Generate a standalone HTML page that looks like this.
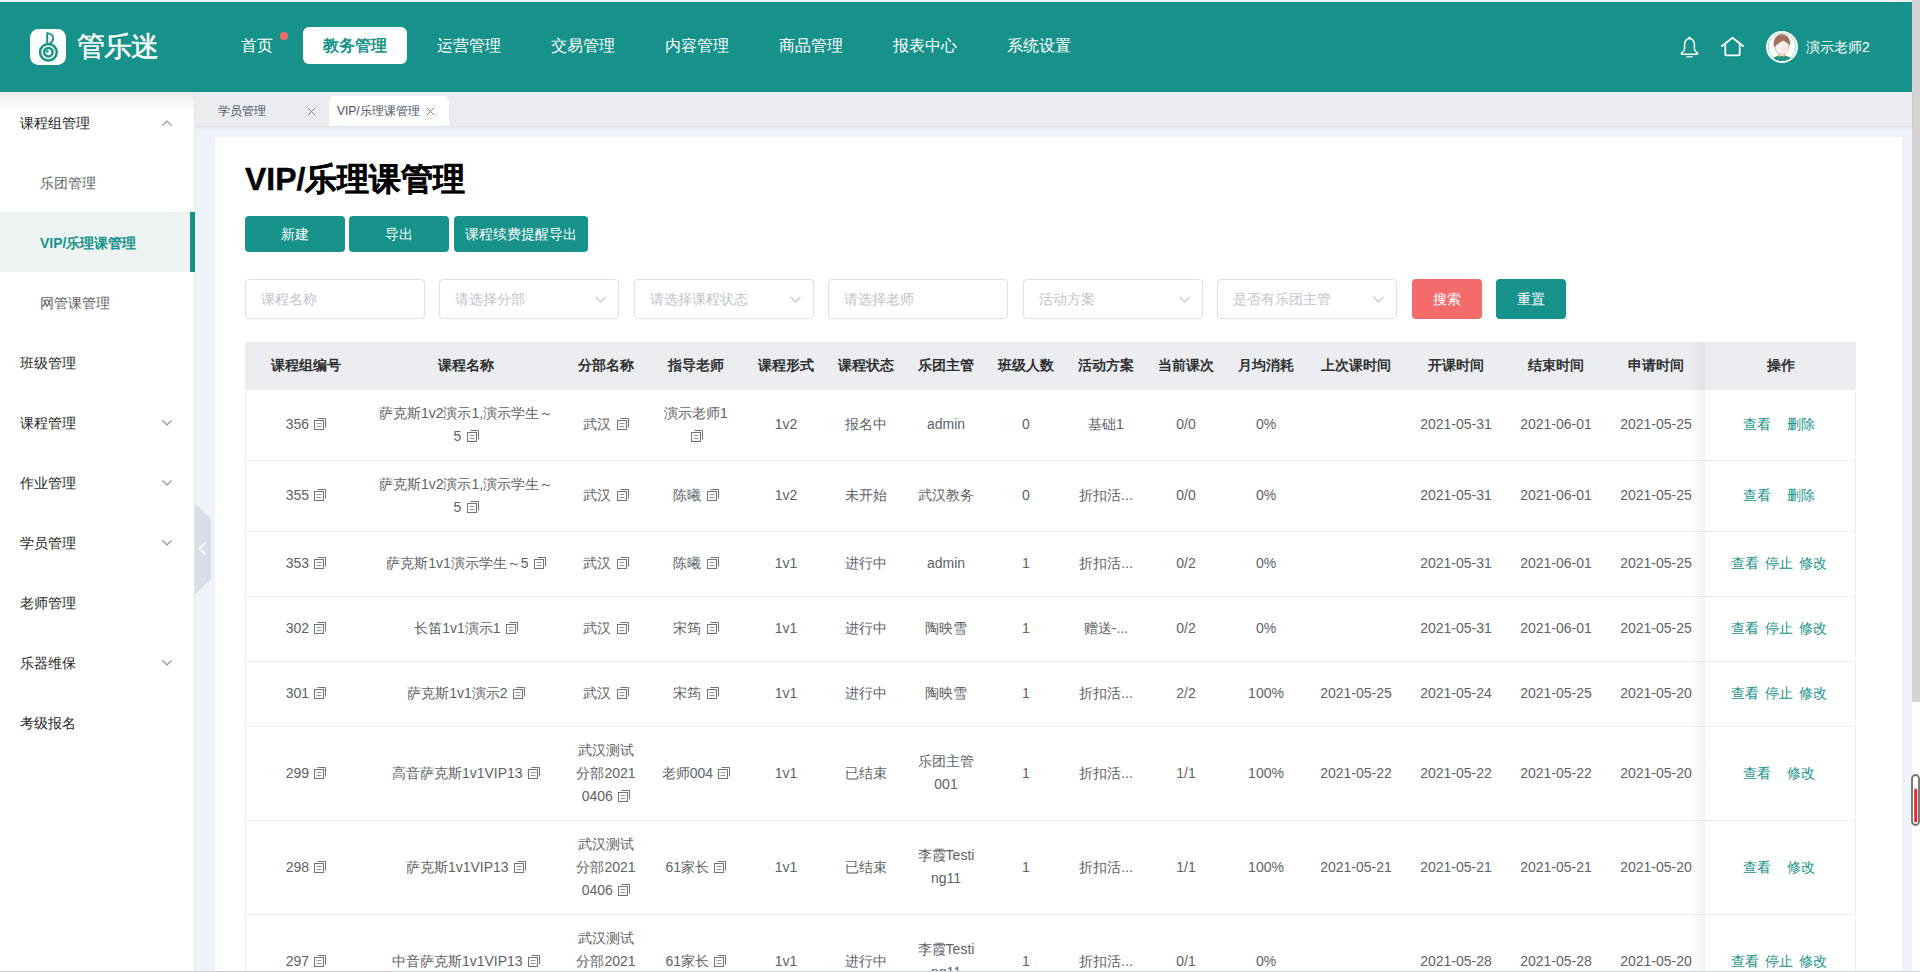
<!DOCTYPE html>
<html><head><meta charset="utf-8">
<style>
*{box-sizing:border-box;margin:0;padding:0}
html,body{width:1920px;height:972px;overflow:hidden;background:#fff;font-family:"Liberation Sans",sans-serif;font-size:14px;color:#606266}
.abs{position:absolute}
#topline{left:0;top:0;width:1920px;height:2px;background:#f4f0f1}
#header{left:0;top:2px;width:1912px;height:90px;background:#16928a}
#logo{left:30px;top:27px;width:36px;height:36px;background:#fff;border-radius:8px}
#logotext{left:77px;top:29px;font-size:28px;color:#fff;line-height:36px;letter-spacing:-1px;-webkit-text-stroke:0.5px #fff}
.nav{position:absolute;top:27px;height:37px;line-height:37px;font-size:16px;color:#fff;padding:0 20px;border-radius:6px;white-space:nowrap}
.nav.act{background:#fff;color:#16928a;font-weight:bold}
#dot{left:280px;top:32px;width:8px;height:8px;border-radius:50%;background:#f26a6a}
#uname{left:1806px;top:37px;font-size:14px;color:#fff;line-height:20px}
#scroll{left:1912px;top:0;width:8px;height:702px;background:#d4d4d4}
#sidebar{left:0;top:92px;width:195px;height:880px;background:#fff;border-right:1px solid #e4e6ea}
#sideshadow{left:0;top:92px;width:194px;height:22px;background:linear-gradient(#ececec,rgba(255,255,255,0))}
.si{position:absolute;left:0;width:194px;height:60px;line-height:60px;font-size:14px;color:#262626;padding-left:20px;padding-top:1px}
.si.sub{padding-left:40px;color:#606266}
.si.act{background:#edf2f2;color:#16928a;font-weight:bold}
.si.act:after{content:"";position:absolute;right:-1px;top:0;width:5px;height:60px;background:#16928a}
.chev{position:absolute;left:162px;top:27px;width:10px;height:8px}
.ops2,.ops3{padding:0 6px 0 2px}
#gutter{left:195px;top:126px;width:1717px;height:846px;background:#eef2f9}
#tabbar{left:195px;top:92px;width:1717px;height:34px;background:#ebecef;box-shadow:0 1px 3px rgba(0,0,0,.1)}
.tab{position:absolute;top:4px;height:30px;line-height:30px;font-size:12px;color:#4a5063}
.tab.act{background:#fff;border-radius:5px 5px 0 0}
#card{left:215px;top:137px;width:1687px;height:835px;background:#fff}
#title{left:245px;top:159px;font-size:32px;font-weight:bold;color:#000;line-height:40px;-webkit-text-stroke:0.4px #000}
.btn{position:absolute;top:216px;height:36px;line-height:36px;font-size:14px;color:#fff;background:#16928a;border-radius:4px;text-align:center}
.inp{position:absolute;top:279px;width:180px;height:40px;border:1px solid #dcdfe6;border-radius:4px;line-height:38px;padding-left:15px;color:#c0c4cc;font-size:14px}
.inp svg{position:absolute;right:12px;top:16px}
.sbtn{position:absolute;top:279px;width:70px;height:40px;line-height:40px;text-align:center;color:#fff;font-size:14px;border-radius:4px}
#tbl{left:245px;top:342px;width:1611px;height:630px;overflow:hidden;border-left:1px solid #ebeef5;border-right:1px solid #ebeef5}
table{border-collapse:collapse;table-layout:fixed;width:1610px}
th{background:#ebedf0;height:48px;font-size:14px;color:#303133;font-weight:bold;text-align:center;padding:0}
td{border-bottom:1px solid #ebeef5;text-align:center;font-size:14px;color:#606266;line-height:23px;padding:0 4px;vertical-align:middle}
.cp{display:inline-block;width:12px;height:12px;vertical-align:-1px;margin-left:1.5px;color:#6a6d73}
.op{color:#16928a}
#fixshadow{left:1690px;top:342px;width:15px;height:630px;background:linear-gradient(90deg,rgba(0,0,0,0),rgba(0,0,0,.05))}
#handle{left:195px;top:504px;width:16px;height:90px}
#bottomline{left:0;top:971px;width:1920px;height:1px;background:linear-gradient(90deg,#c8c8c8 0,#c8c8c8 392px,#c4dede 392px,#c4dede 100%)}
</style></head><body>
<svg width="0" height="0" style="position:absolute"><defs><symbol id="cpi" viewBox="0 0 12 12"><rect x="0.5" y="2.5" width="9" height="9" fill="none" stroke="currentColor" stroke-width="0.95"/><path d="M3.5 0.5H11.5V9.5" fill="none" stroke="currentColor" stroke-width="0.95"/><path d="M2.6 5.6H7.4M2.6 8.6H7.4" stroke="currentColor" stroke-width="0.8"/></symbol></defs></svg>
<div id="topline" class="abs"></div>
<div id="header" class="abs"></div>
<svg class="abs" style="left:30px;top:29px" width="36" height="36" viewBox="0 0 36 36">
<rect x="0" y="0" width="36" height="36" rx="8.5" fill="#fff"/>
<circle cx="18.4" cy="23.2" r="8.3" fill="none" stroke="#16928a" stroke-width="2.5"/>
<circle cx="18.4" cy="23.2" r="4.2" fill="none" stroke="#16928a" stroke-width="2.5"/>
<circle cx="17.4" cy="22.3" r="1.3" fill="#16928a"/>
<path d="M17.2 14.2V3.4" stroke="#16928a" stroke-width="1.9" fill="none"/>
<path d="M17.2 4.1C21.5 4.6 23.3 7.4 23.2 9.6C23.1 11.6 21.9 13.2 20 14.2" stroke="#16928a" stroke-width="1.9" fill="none"/>
</svg>
<div id="logotext" class="abs">管乐迷</div>
<div class="nav" style="left:221px">首页</div>
<div id="dot" class="abs"></div>
<div class="nav act" style="left:303px">教务管理</div>
<div class="nav" style="left:417px">运营管理</div>
<div class="nav" style="left:531px">交易管理</div>
<div class="nav" style="left:645px">内容管理</div>
<div class="nav" style="left:759px">商品管理</div>
<div class="nav" style="left:873px">报表中心</div>
<div class="nav" style="left:987px">系统设置</div>
<svg class="abs" style="left:1679px;top:36px" width="21" height="22" viewBox="0 0 21 22">
<path d="M10.5 2.8C7.2 2.8 5.6 5.5 5.6 8.6V12.8C5.6 14.6 4.3 16 2.5 17.2C2 17.6 2.2 18.2 2.8 18.2H18.2C18.8 18.2 19 17.6 18.5 17.2C16.7 16 15.4 14.6 15.4 12.8V8.6C15.4 5.5 13.8 2.8 10.5 2.8Z" fill="none" stroke="#fff" stroke-width="1.5"/>
<path d="M9.3 2.9C9.3 1.8 9.8 1.3 10.5 1.3C11.2 1.3 11.7 1.8 11.7 2.9" fill="none" stroke="#fff" stroke-width="1.3"/>
<path d="M7.2 20.8H13.8" stroke="#fff" stroke-width="1.1"/>
</svg>
<svg class="abs" style="left:1721px;top:36px" width="23" height="21" viewBox="0 0 23 21">
<path d="M1 10L11.5 1.8L22 10" fill="none" stroke="#fff" stroke-width="1.8" stroke-linejoin="round" stroke-linecap="round"/>
<path d="M4.3 7.6V18.3C4.3 19 4.7 19.3 5.3 19.3H17.7C18.3 19.3 18.7 19 18.7 18.3V7.6" fill="none" stroke="#fff" stroke-width="1.8"/>
</svg>
<svg class="abs" style="left:1766px;top:31px" width="32" height="32" viewBox="0 0 32 32">
<defs><clipPath id="avc"><circle cx="16" cy="16" r="14"/></clipPath></defs>
<circle cx="16" cy="16" r="16" fill="#fff"/>
<circle cx="16" cy="16" r="13.8" fill="none" stroke="#8fcdc8" stroke-width="0.8"/>
<g clip-path="url(#avc)">
<path d="M6 30Q7 25.8 12.5 24.8H19.5Q25 25.8 26 30V34H6Z" fill="#16928a"/>
</g>
<rect x="13.3" y="20" width="5.2" height="5" fill="#fdf1ef"/>
<path d="M13.3 22.5V24.8M18.5 22.5V24.8" stroke="#8d7b78" stroke-width="0.5"/>
<ellipse cx="15.8" cy="16.3" rx="6.6" ry="7" fill="#fdf1ef" stroke="#8d7b78" stroke-width="0.5"/>
<path d="M15.8 16.3H22.4C22.2 20.3 19.5 23.3 15.8 23.3Z" fill="#fbe4e0"/>
<path d="M11.8 23.6L13.2 27L14.6 25ZM19.2 23.6L17.8 27L16.6 25Z" fill="#d9a514"/>
<path d="M7.9 16.2C6.4 9.2 10 3.2 15.8 3.2C21.6 3.2 25.2 8.2 24 15.6C23.6 14 23 13 22.3 12.5C20.6 11.6 19 10.6 17.4 9.6C14.2 11.4 11 13.4 7.9 16.2Z" fill="#a2705c"/>
</svg>
<div id="uname" class="abs">演示老师2</div>
<div id="scroll" class="abs"></div>

<div id="gutter" class="abs"></div>
<div id="tabbar" class="abs">
  <div class="tab" style="left:23px;width:110px">学员管理</div>
  <svg class="abs" style="left:111.5px;top:15px" width="9" height="9" viewBox="0 0 9 9"><path d="M0.8 0.8L8.2 8.2M8.2 0.8L0.8 8.2" stroke="#7d8290" stroke-width="1"/></svg>
  <div class="tab act" style="left:134px;width:120px;padding-left:8px">VIP/乐理课管理</div>
  <svg class="abs" style="left:230.5px;top:15px" width="9" height="9" viewBox="0 0 9 9"><path d="M0.8 0.8L8.2 8.2M8.2 0.8L0.8 8.2" stroke="#7d8290" stroke-width="1"/></svg>
</div>
<div id="card" class="abs"></div>
<div id="title" class="abs">VIP/乐理课管理</div>
<div class="btn" style="left:245px;width:100px">新建</div>
<div class="btn" style="left:349px;width:100px">导出</div>
<div class="btn" style="left:454px;width:134px">课程续费提醒导出</div>


<div class="inp" style="left:245px">课程名称</div>
<div class="inp" style="left:439px">请选择分部<svg width="11" height="7" viewBox="0 0 11 7"><path d="M0.5 0.8 L5.5 5.8 L10.5 0.8" fill="none" stroke="#c0c4cc" stroke-width="1.2"/></svg></div>
<div class="inp" style="left:634px">请选择课程状态<svg width="11" height="7" viewBox="0 0 11 7"><path d="M0.5 0.8 L5.5 5.8 L10.5 0.8" fill="none" stroke="#c0c4cc" stroke-width="1.2"/></svg></div>
<div class="inp" style="left:828px">请选择老师</div>
<div class="inp" style="left:1023px">活动方案<svg width="11" height="7" viewBox="0 0 11 7"><path d="M0.5 0.8 L5.5 5.8 L10.5 0.8" fill="none" stroke="#c0c4cc" stroke-width="1.2"/></svg></div>
<div class="inp" style="left:1217px">是否有乐团主管<svg width="11" height="7" viewBox="0 0 11 7"><path d="M0.5 0.8 L5.5 5.8 L10.5 0.8" fill="none" stroke="#c0c4cc" stroke-width="1.2"/></svg></div>
<div class="sbtn" style="left:1412px;background:#f36b6b">搜索</div>
<div class="sbtn" style="left:1496px;background:#16928a">重置</div>
<div id="tbl" class="abs"><table><colgroup><col style="width:120px"><col style="width:200px"><col style="width:80px"><col style="width:100px"><col style="width:80px"><col style="width:80px"><col style="width:80px"><col style="width:80px"><col style="width:80px"><col style="width:80px"><col style="width:80px"><col style="width:100px"><col style="width:100px"><col style="width:100px"><col style="width:100px"><col style="width:150px"></colgroup>
<tr><th>课程组编号</th><th>课程名称</th><th>分部名称</th><th>指导老师</th><th>课程形式</th><th>课程状态</th><th>乐团主管</th><th>班级人数</th><th>活动方案</th><th>当前课次</th><th>月均消耗</th><th>上次课时间</th><th>开课时间</th><th>结束时间</th><th>申请时间</th><th>操作</th></tr>
<tr style="height:70px"><td>356 <svg class="cp" viewBox="0 0 12 12"><use href="#cpi"/></svg></td><td>萨克斯1v2演示1,演示学生～<br>5 <svg class="cp" viewBox="0 0 12 12"><use href="#cpi"/></svg></td><td>武汉 <svg class="cp" viewBox="0 0 12 12"><use href="#cpi"/></svg></td><td>演示老师1<br><svg class="cp" viewBox="0 0 12 12"><use href="#cpi"/></svg></td><td>1v2</td><td>报名中</td><td>admin</td><td>0</td><td>基础1</td><td>0/0</td><td>0%</td><td></td><td>2021-05-31</td><td>2021-06-01</td><td>2021-05-25</td><td class="ops2"><span class="op">查看</span><span class="op" style="margin-left:16px">删除</span></td></tr>
<tr style="height:71px"><td>355 <svg class="cp" viewBox="0 0 12 12"><use href="#cpi"/></svg></td><td>萨克斯1v2演示1,演示学生～<br>5 <svg class="cp" viewBox="0 0 12 12"><use href="#cpi"/></svg></td><td>武汉 <svg class="cp" viewBox="0 0 12 12"><use href="#cpi"/></svg></td><td>陈曦 <svg class="cp" viewBox="0 0 12 12"><use href="#cpi"/></svg></td><td>1v2</td><td>未开始</td><td>武汉教务</td><td>0</td><td>折扣活...</td><td>0/0</td><td>0%</td><td></td><td>2021-05-31</td><td>2021-06-01</td><td>2021-05-25</td><td class="ops2"><span class="op">查看</span><span class="op" style="margin-left:16px">删除</span></td></tr>
<tr style="height:65px"><td>353 <svg class="cp" viewBox="0 0 12 12"><use href="#cpi"/></svg></td><td>萨克斯1v1演示学生～5 <svg class="cp" viewBox="0 0 12 12"><use href="#cpi"/></svg></td><td>武汉 <svg class="cp" viewBox="0 0 12 12"><use href="#cpi"/></svg></td><td>陈曦 <svg class="cp" viewBox="0 0 12 12"><use href="#cpi"/></svg></td><td>1v1</td><td>进行中</td><td>admin</td><td>1</td><td>折扣活...</td><td>0/2</td><td>0%</td><td></td><td>2021-05-31</td><td>2021-06-01</td><td>2021-05-25</td><td class="ops3"><span class="op">查看</span><span class="op" style="margin-left:6px">停止</span><span class="op" style="margin-left:6px">修改</span></td></tr>
<tr style="height:65px"><td>302 <svg class="cp" viewBox="0 0 12 12"><use href="#cpi"/></svg></td><td>长笛1v1演示1 <svg class="cp" viewBox="0 0 12 12"><use href="#cpi"/></svg></td><td>武汉 <svg class="cp" viewBox="0 0 12 12"><use href="#cpi"/></svg></td><td>宋筠 <svg class="cp" viewBox="0 0 12 12"><use href="#cpi"/></svg></td><td>1v1</td><td>进行中</td><td>陶映雪</td><td>1</td><td>赠送-...</td><td>0/2</td><td>0%</td><td></td><td>2021-05-31</td><td>2021-06-01</td><td>2021-05-25</td><td class="ops3"><span class="op">查看</span><span class="op" style="margin-left:6px">停止</span><span class="op" style="margin-left:6px">修改</span></td></tr>
<tr style="height:65px"><td>301 <svg class="cp" viewBox="0 0 12 12"><use href="#cpi"/></svg></td><td>萨克斯1v1演示2 <svg class="cp" viewBox="0 0 12 12"><use href="#cpi"/></svg></td><td>武汉 <svg class="cp" viewBox="0 0 12 12"><use href="#cpi"/></svg></td><td>宋筠 <svg class="cp" viewBox="0 0 12 12"><use href="#cpi"/></svg></td><td>1v1</td><td>进行中</td><td>陶映雪</td><td>1</td><td>折扣活...</td><td>2/2</td><td>100%</td><td>2021-05-25</td><td>2021-05-24</td><td>2021-05-25</td><td>2021-05-20</td><td class="ops3"><span class="op">查看</span><span class="op" style="margin-left:6px">停止</span><span class="op" style="margin-left:6px">修改</span></td></tr>
<tr style="height:94px"><td>299 <svg class="cp" viewBox="0 0 12 12"><use href="#cpi"/></svg></td><td>高音萨克斯1v1VIP13 <svg class="cp" viewBox="0 0 12 12"><use href="#cpi"/></svg></td><td>武汉测试<br>分部2021<br>0406 <svg class="cp" viewBox="0 0 12 12"><use href="#cpi"/></svg></td><td>老师004 <svg class="cp" viewBox="0 0 12 12"><use href="#cpi"/></svg></td><td>1v1</td><td>已结束</td><td>乐团主管<br>001</td><td>1</td><td>折扣活...</td><td>1/1</td><td>100%</td><td>2021-05-22</td><td>2021-05-22</td><td>2021-05-22</td><td>2021-05-20</td><td class="ops2"><span class="op">查看</span><span class="op" style="margin-left:16px">修改</span></td></tr>
<tr style="height:94px"><td>298 <svg class="cp" viewBox="0 0 12 12"><use href="#cpi"/></svg></td><td>萨克斯1v1VIP13 <svg class="cp" viewBox="0 0 12 12"><use href="#cpi"/></svg></td><td>武汉测试<br>分部2021<br>0406 <svg class="cp" viewBox="0 0 12 12"><use href="#cpi"/></svg></td><td>61家长 <svg class="cp" viewBox="0 0 12 12"><use href="#cpi"/></svg></td><td>1v1</td><td>已结束</td><td>李霞Testi<br>ng11</td><td>1</td><td>折扣活...</td><td>1/1</td><td>100%</td><td>2021-05-21</td><td>2021-05-21</td><td>2021-05-21</td><td>2021-05-20</td><td class="ops2"><span class="op">查看</span><span class="op" style="margin-left:16px">修改</span></td></tr>
<tr style="height:94px"><td>297 <svg class="cp" viewBox="0 0 12 12"><use href="#cpi"/></svg></td><td>中音萨克斯1v1VIP13 <svg class="cp" viewBox="0 0 12 12"><use href="#cpi"/></svg></td><td>武汉测试<br>分部2021<br>0406 <svg class="cp" viewBox="0 0 12 12"><use href="#cpi"/></svg></td><td>61家长 <svg class="cp" viewBox="0 0 12 12"><use href="#cpi"/></svg></td><td>1v1</td><td>进行中</td><td>李霞Testi<br>ng11</td><td>1</td><td>折扣活...</td><td>0/1</td><td>0%</td><td></td><td>2021-05-28</td><td>2021-05-28</td><td>2021-05-20</td><td class="ops3"><span class="op">查看</span><span class="op" style="margin-left:6px">停止</span><span class="op" style="margin-left:6px">修改</span></td></tr>
</table></div>
<div id="fixshadow" class="abs"></div>
<div id="sidebar" class="abs"></div>
<div id="sideshadow" class="abs"></div>
<div class="si" style="top:92px">课程组管理<svg class="chev" viewBox="0 0 10 8"><path d="M0.5 6.5L5 2L9.5 6.5" fill="none" stroke="#8d929c" stroke-width="1.1"/></svg></div>
<div class="si sub" style="top:152px">乐团管理</div>
<div class="si sub act" style="top:212px">VIP/乐理课管理</div>
<div class="si sub" style="top:272px">网管课管理</div>
<div class="si" style="top:332px">班级管理</div>
<div class="si" style="top:392px">课程管理<svg class="chev" viewBox="0 0 10 8"><path d="M0.5 1.5L5 6L9.5 1.5" fill="none" stroke="#8d929c" stroke-width="1.1"/></svg></div>
<div class="si" style="top:452px">作业管理<svg class="chev" viewBox="0 0 10 8"><path d="M0.5 1.5L5 6L9.5 1.5" fill="none" stroke="#8d929c" stroke-width="1.1"/></svg></div>
<div class="si" style="top:512px">学员管理<svg class="chev" viewBox="0 0 10 8"><path d="M0.5 1.5L5 6L9.5 1.5" fill="none" stroke="#8d929c" stroke-width="1.1"/></svg></div>
<div class="si" style="top:572px">老师管理</div>
<div class="si" style="top:632px">乐器维保<svg class="chev" viewBox="0 0 10 8"><path d="M0.5 1.5L5 6L9.5 1.5" fill="none" stroke="#8d929c" stroke-width="1.1"/></svg></div>
<div class="si" style="top:692px">考级报名</div>
<svg class="abs" style="left:195px;top:503px" width="17" height="92" viewBox="0 0 17 92"><path d="M0 0.5L16 16V76L0 91.5Z" fill="#d6dee6"/><path d="M10.5 39.5L4.5 45.5L10.5 51.5" fill="none" stroke="#fff" stroke-width="1.6"/></svg>
<svg class="abs" style="left:1911px;top:774px" width="9" height="52" viewBox="0 0 9 52"><rect x="1" y="1" width="7" height="50" rx="3.5" fill="#fff" stroke="#6e6e6e" stroke-width="1.8"/><rect x="3.2" y="14.5" width="3" height="34" rx="1.5" fill="#e8282e"/></svg>
<div id="bottomline" class="abs"></div>
</body></html>
